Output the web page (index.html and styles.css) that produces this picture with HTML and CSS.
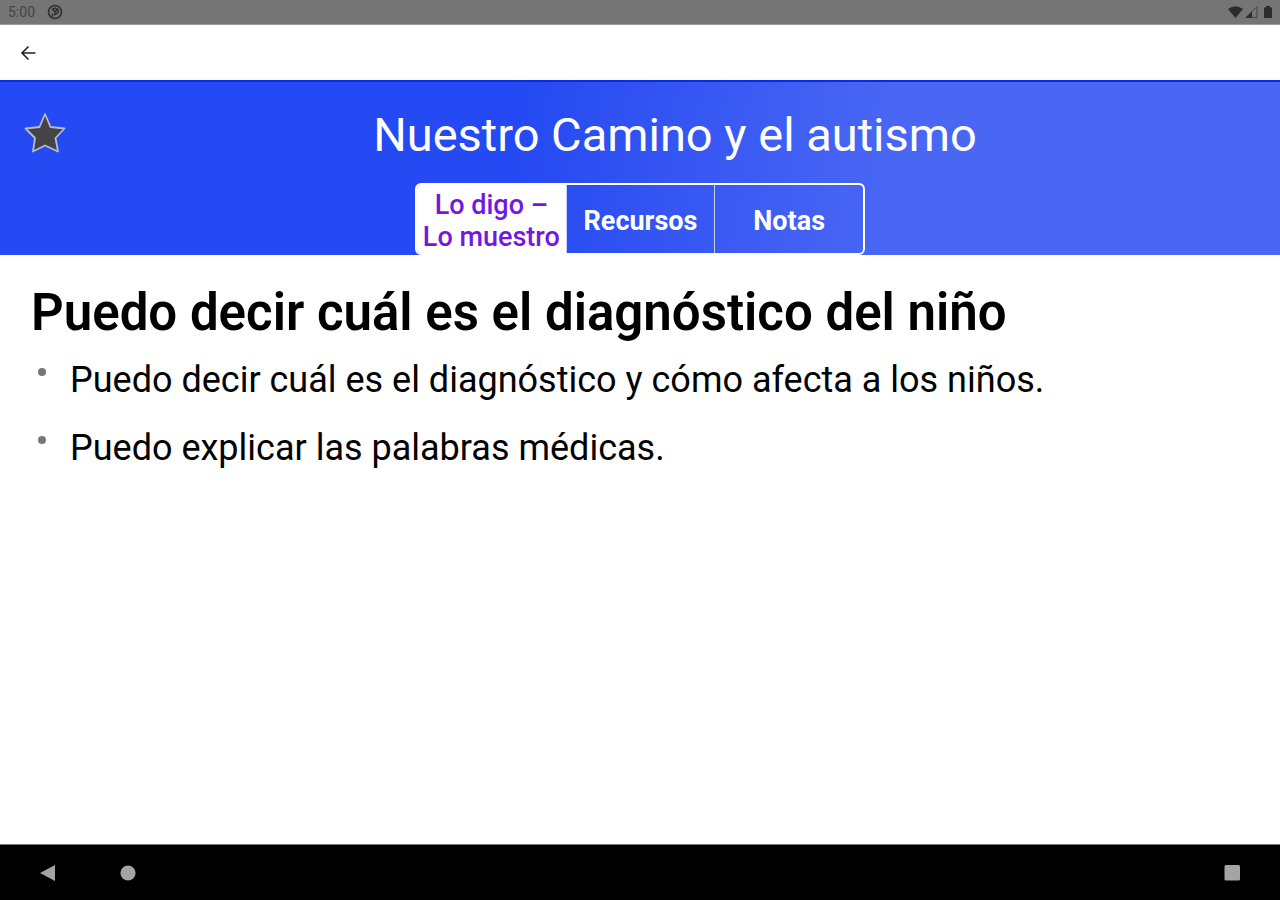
FILE: index.html
```html
<!DOCTYPE html>
<html lang="es">
<head>
<meta charset="utf-8">
<meta name="viewport" content="width=device-width, initial-scale=1">
<title>Nuestro Camino y el autismo</title>
<link rel="stylesheet" href="styles.css">
</head>
<body>
<div class="status">
  <span class="time">5:00</span>
  <svg class="status-icon" viewBox="0 0 16 16" width="16" height="16" aria-hidden="true"><circle cx="8" cy="8" r="6.5" fill="none" stroke="#303030" stroke-width="1.6"/><path d="M5 5.5 8 4l3 1.5v3L8 10.500V7.500M5 5.500l3 2 3-2M5.500 12.500V9.500" fill="none" stroke="#303030" stroke-width="1.500"/></svg>
  <svg class="signals" viewBox="0 0 48 16" width="48" height="16" aria-hidden="true"><path d="M0 5Q7.500-.500 15 5L7.500 14Z" fill="#2b2b2b"/><path d="M18 13.500 29 2.500V13.500Z" fill="none" stroke="#454545" stroke-width="1"/><path d="M17.500 14 24 7.500V14Z" fill="#2b2b2b"/><path d="M36 3.500h2V2h4v1.500h2V14h-8Z" fill="#2b2b2b"/></svg>
</div>
<nav class="toolbar">
  <button class="back" type="button" aria-label="Atrás"><svg viewBox="0 0 16 16" width="16" height="16"><path d="M15.500 8H2M8.500 1.500 2 8l6.500 6.500" fill="none" stroke="#222" stroke-width="1.600"/></svg></button>
</nav>
<header class="hero">
  <div class="heading">
    <button class="favorite" type="button" aria-label="Favorito"><svg viewBox="0 0 42 42" width="42" height="42"><path d="M21 2 26.500 15 40.500 16.500 31.500 26 34 39.500 21 33.500 9 39.500 11 26 1.500 16.500 15.500 15Z" fill="#444" stroke="#b4bdc8" stroke-width="1.800" stroke-linejoin="round"/></svg></button>
    <h1 class="title">Nuestro Camino y el autismo</h1>
  </div>
  <div class="tabs" role="tablist">
    <button class="tab active" type="button" role="tab" aria-selected="true">Lo digo –<br>Lo muestro</button>
    <button class="tab" type="button" role="tab" aria-selected="false">Recursos</button>
    <button class="tab" type="button" role="tab" aria-selected="false">Notas</button>
  </div>
</header>
<main class="content">
  <h2 class="subject">Puedo decir cuál es el diagnóstico del niño</h2>
  <ul class="points">
    <li class="point">Puedo decir cuál es el diagnóstico y cómo afecta a los niños.</li>
    <li class="point">Puedo explicar las palabras médicas.</li>
  </ul>
</main>
<footer class="navbar">
  <button class="nav-button" type="button" aria-label="Volver"><svg viewBox="0 0 18 18" width="18" height="18"><path d="M1 9 16 1V17Z" fill="#a4a4a4"/></svg></button>
  <button class="nav-button" type="button" aria-label="Inicio"><svg viewBox="0 0 18 18" width="18" height="18"><circle cx="9" cy="9" r="7.600" fill="#a4a4a4"/></svg></button>
  <button class="nav-button recent" type="button" aria-label="Recientes"><svg viewBox="0 0 18 18" width="18" height="18"><rect x="1.500" y="1" width="15.500" height="15.500" rx="1.500" fill="#a4a4a4"/></svg></button>
</footer>
</body>
</html>
```
FILE: styles.css
```css
* { box-sizing: border-box; }
body {
  display: flex;
  flex-direction: column;
  min-height: 100vh;
  margin: 0;
  background: #fff;
  color: #000;
  font-family: Roboto, "Liberation Sans", sans-serif;
}
button {
  padding: 0;
  border: 0;
  background: none;
  color: inherit;
  font: inherit;
}
svg { display: block; }
.status {
  display: flex;
  align-items: center;
  gap: 12px;
  height: 25px;
  padding: 0 4px 0 8px;
  border-bottom: 1px solid #9a9a9a;
  background: #757575;
}
.time { color: #444; font-size: 14px; line-height: 16px; }
.signals { margin-left: auto; }
.toolbar {
  display: flex;
  align-items: center;
  height: 55px;
  padding: 0 20px;
}
.hero {
  display: flex;
  flex-direction: column;
  align-items: center;
  border-top: 2px solid #0a2ce0;
  background: linear-gradient(95deg, #2549f2 40%, #4a67f4 70%);
}
.heading {
  display: flex;
  align-items: center;
  align-self: stretch;
  padding: 16px 0 12px 24px;
}
.favorite { width: 46px; padding-bottom: 4px; }
.title {
  flex: 1;
  margin: 0;
  color: #fff;
  font-size: 47px;
  font-weight: 400;
  line-height: 73px;
  text-align: center;
}
.tabs {
  display: grid;
  grid-template-columns: repeat(3, 1fr);
  width: 450px;
  max-width: 100%;
  border: 2px solid #fff;
  border-radius: 6px;
  overflow: hidden;
}
.tab {
  min-height: 68px;
  padding-top: 4px;
  color: #fff;
  font-size: 27px;
  font-weight: 700;
  line-height: 32px;
  white-space: nowrap;
}
.tab + .tab { border-left: 1px solid #c5cffc; }
.active { background: #fff; color: #7416e6; font-weight: 500; }
.content { flex: 1; padding: 28px 31px; }
.subject { margin: 0; font-size: 51px; font-weight: 600; line-height: 60px; }
.points { margin: 13px 0 0; padding: 0; list-style: none; }
.point {
  position: relative;
  margin-bottom: 20px;
  padding-left: 39px;
  font-size: 36px;
  line-height: 48px;
}
.point::before {
  content: "";
  position: absolute;
  top: 12px;
  left: 7px;
  width: 8px;
  height: 8px;
  border-radius: 50%;
  background: #777;
}
.navbar {
  display: flex;
  align-items: center;
  gap: 62px;
  height: 56px;
  padding: 0 39px;
  border-top: 1px solid #777;
  background: #000;
}
.recent { margin-left: auto; }
```
